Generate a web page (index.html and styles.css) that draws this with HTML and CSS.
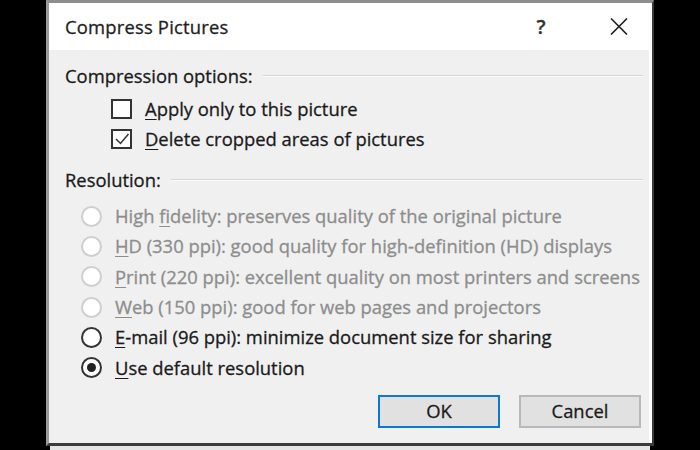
FILE: index.html
```html
<!DOCTYPE html>
<html lang="en">
<head>
<meta charset="utf-8">
<title>Compress Pictures</title>
<link rel="stylesheet" href="styles.css">
</head>
<body>
<div class="dialog">
  <div class="titlebar">
    <span class="title">Compress Pictures</span>
    <span class="help">?</span>
    <span class="close">
      <svg width="18" height="17" viewBox="0 0 18 17"><path d="M1 0.5 L17 16.5 M17 0.5 L1 16.5" stroke="#1f1f1f" stroke-width="1.6" fill="none"/></svg>
    </span>
  </div>
  <div class="content">
    <div class="group-head"><span>Compression options:</span><span class="rule"></span></div>
    <div class="check-row">
      <span class="checkbox"></span>
      <span class="label"><u>A</u>pply only to this picture</span>
    </div>
    <div class="check-row">
      <span class="checkbox">
        <svg width="16" height="16" viewBox="0 0 16 16"><path d="M2 8 L6.5 12.5 L14.5 3" stroke="#333" stroke-width="1.5" fill="none"/></svg>
      </span>
      <span class="label"><u>D</u>elete cropped areas of pictures</span>
    </div>
    <div class="group-head second"><span>Resolution:</span><span class="rule"></span></div>
    <div class="radios">
      <div class="radio-row disabled"><span class="radio"></span><span class="label">High <u>f</u>idelity: preserves quality of the original picture</span></div>
      <div class="radio-row disabled"><span class="radio"></span><span class="label"><u>H</u>D (330 ppi): good quality for high-definition (HD) displays</span></div>
      <div class="radio-row disabled"><span class="radio"></span><span class="label"><u>P</u>rint (220 ppi): excellent quality on most printers and screens</span></div>
      <div class="radio-row disabled"><span class="radio"></span><span class="label"><u>W</u>eb (150 ppi): good for web pages and projectors</span></div>
      <div class="radio-row"><span class="radio"></span><span class="label"><u>E</u>-mail (96 ppi): minimize document size for sharing</span></div>
      <div class="radio-row"><span class="radio checked"></span><span class="label"><u>U</u>se default resolution</span></div>
    </div>
    <div class="buttons">
      <button class="btn default">OK</button>
      <button class="btn">Cancel</button>
    </div>
  </div>
</div>
<div class="under"></div>
</body>
</html>
```
FILE: styles.css
```css
html, body {
  margin: 0;
  padding: 0;
  background: #000;
  width: 700px;
  height: 450px;
  overflow: hidden;
}

body {
  font-family: "Open Sans", "Noto Sans", sans-serif;
  font-size: 18.4px;
  color: #1a1a1a;
  -webkit-text-stroke: 0.3px currentColor;
}

.dialog {
  box-sizing: border-box;
  margin-left: 46px;
  width: 608px;
  height: 446px;
  background: #fff;
  border-top: 3px solid #8e8e8e;
  border-left: 3px solid #9a9a9a;
  border-right: 2px solid #3a3a3a;
  border-bottom: 3px solid #3c3c3c;
  display: flex;
  flex-direction: column;
}

.under {
  margin-left: 50px;
  width: 600px;
  height: 4px;
  background: #e6e6e6;
}

.titlebar {
  height: 47px;
  display: flex;
  align-items: center;
  padding-left: 16px;
  line-height: 24px;
}

.title {
  flex: 1;
  color: #1e1e1e;
  letter-spacing: 0.2px;
}

.help {
  width: 14px;
  text-align: center;
  font-size: 20px;
  font-weight: 600;
  margin-right: 62px;
  color: #333;
}

.close {
  display: flex;
  width: 18px;
  margin-right: 24px;
}

.content {
  flex: 1;
  background: #f0f0f0;
  margin-right: 3px;
  padding: 11px 0 0 16px;
  line-height: 24px;
}

.group-head {
  height: 30px;
  display: flex;
  align-items: center;
}

.group-head.second {
  margin-top: 11px;
}

.rule {
  flex: 1;
  height: 0;
  border-top: 1px solid #d6d6d6;
  border-bottom: 1px solid #fafafa;
  margin-left: 10px;
  margin-right: 6px;
}

.check-row {
  height: 30px;
  display: flex;
  align-items: center;
  padding-left: 46px;
}

.group-head + .check-row {
  margin-top: 3px;
}

.checkbox {
  box-sizing: border-box;
  width: 21px;
  height: 20px;
  border: 2px solid #333;
  background: #fff;
  display: flex;
  align-items: center;
  justify-content: center;
  margin-right: 13px;
}

.radios {
  margin-top: 6px;
}

.radio-row {
  height: 30.3px;
  display: flex;
  align-items: center;
  padding-left: 16px;
}

.radio {
  box-sizing: border-box;
  width: 21px;
  height: 21px;
  border-radius: 50%;
  border: 2px solid #333;
  background: #fff;
  margin-right: 13px;
  display: flex;
  align-items: center;
  justify-content: center;
}

.radio.checked::after {
  content: "";
  width: 9px;
  height: 9px;
  border-radius: 50%;
  background: #222;
}

.disabled .radio {
  border-color: #cfcfcf;
}

.disabled .label {
  color: #8d8d8d;
}

.label u {
  text-underline-offset: 3px;
  text-decoration-thickness: 1px;
}

.buttons {
  display: flex;
  justify-content: flex-end;
  gap: 19px;
  margin-top: 12px;
  padding-right: 8px;
}

.btn {
  box-sizing: border-box;
  width: 122px;
  height: 33px;
  background: #e1e1e1;
  border: 2px solid #b9b9b9;
  font-family: "Open Sans", "Noto Sans", sans-serif;
  font-size: 18.4px;
  color: #1a1a1a;
  padding: 0;
  line-height: 24px;
  -webkit-text-stroke: 0.3px currentColor;
}

.btn.default {
  border-color: #0a78d4;
}
```
